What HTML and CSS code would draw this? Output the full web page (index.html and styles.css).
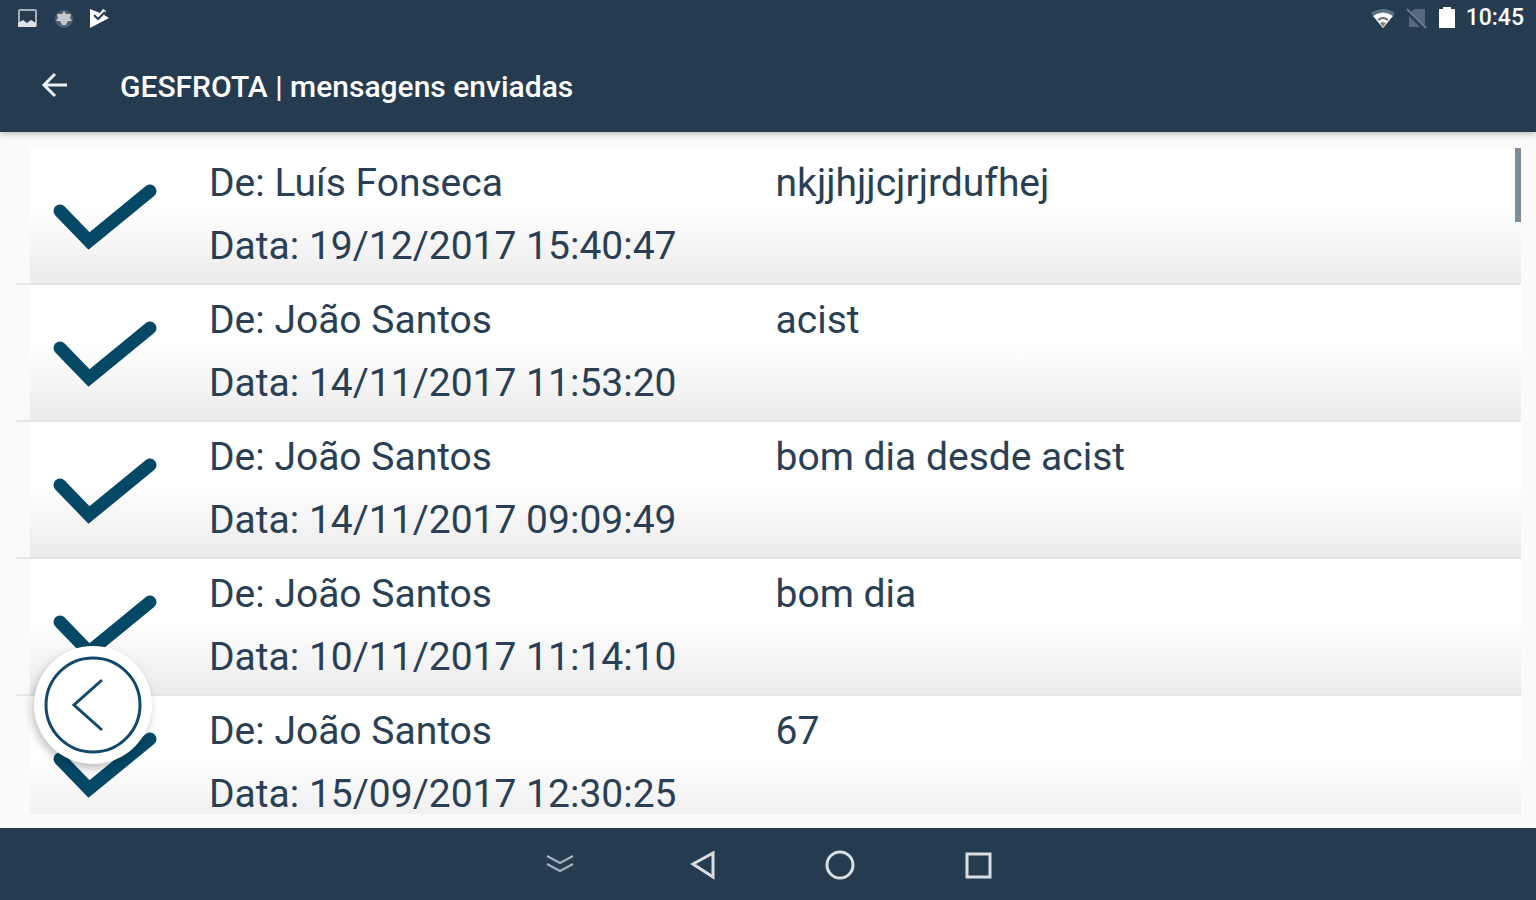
FILE: index.html
```html
<!DOCTYPE html>
<html lang="pt">

<head>
    <meta charset="UTF-8">
    <meta name="viewport" content="width=device-width, initial-scale=1.0">
    <title>GESFROTA | mensagens enviadas</title>
    <link rel="stylesheet" href="styles.css">
</head>

<body>

    <header class="top">
        <div class="status-bar">
            <div class="status-icons">
                <svg width="22" height="22" viewBox="0 0 22 22">
                    <rect x="3" y="3" width="17" height="16" rx="1" fill="none" stroke="#a4afba" stroke-width="2"/>
                    <path d="M2 20V16L7 13L11 16L15 13L20 16V20Z" fill="#dfe4e8"/>
                </svg>
                <svg width="22" height="22" viewBox="0 0 22 22">
                    <circle cx="12" cy="12" r="9" fill="#4c5f71"/>
                    <path d="M12 4L14 7H19L18 11L20 14H16L14 18H10L8 14H4L6 11L5 7H10Z" fill="#c3c9cf"/>
                </svg>
                <svg width="22" height="22" viewBox="0 0 22 22">
                    <path d="M2 2L12 6L15 2L18 4L16 8L21 11L2 21Z" fill="#fff"/>
                    <path d="M6 8L10 12L17 5" fill="none" stroke="#253b50" stroke-width="2"/>
                </svg>
            </div>
            <div class="status-icons status-right">
                <svg width="26" height="22" viewBox="0 0 26 22">
                    <path d="M1 6Q13 -2 25 6L13 21Z" fill="#5d7080"/>
                    <path d="M3 9Q13 2 23 9L13 21Z" fill="#fff"/>
                    <path d="M8 13Q13 9 18 13" fill="none" stroke="#6d6c6c" stroke-width="2"/>
                    <path d="M10 16Q13 14 16 16L13 20Z" fill="#8a8178"/>
                </svg>
                <svg width="22" height="22" viewBox="0 0 22 22">
                    <path d="M8 2H19V20H3V7Z" fill="#566879"/>
                    <path d="M1 5L18 22" stroke="#253b50" stroke-width="3"/>
                    <path d="M1 2L20 21" stroke="#66788a" stroke-width="2"/>
                </svg>
                <svg width="18" height="22" viewBox="0 0 18 22">
                    <path d="M1 2H5V0H13V2H17V21H1Z" fill="#fff"/>
                </svg>
                <span class="clock">10:45</span>
            </div>
        </div>
        <div class="app-bar">
            <button class="back" type="button" aria-label="Voltar">
                <svg width="28" height="28" viewBox="0 0 28 28">
                    <path d="M15 2L4 13L15 24M4 13H27" fill="none" stroke="#eef1f3" stroke-width="3"/>
                </svg>
            </button>
            <h1>GESFROTA | mensagens enviadas</h1>
        </div>
    </header>

    <main class="content">
        <ul class="messages">
            <li class="message">
                <div class="row">
                    <svg class="check" width="106" height="68" viewBox="0 0 106 68"><path d="M8 28L37 58L98 8"/></svg>
                    <div class="sender">
                        <p>De: Luís Fonseca</p>
                        <p>Data: 19/12/2017 15:40:47</p>
                    </div>
                    <p class="text">nkjjhjjcjrjrdufhej</p>
                </div>
            </li>
            <li class="message">
                <div class="row">
                    <svg class="check" width="106" height="68" viewBox="0 0 106 68"><path d="M8 28L37 58L98 8"/></svg>
                    <div class="sender">
                        <p>De: João Santos</p>
                        <p>Data: 14/11/2017 11:53:20</p>
                    </div>
                    <p class="text">acist</p>
                </div>
            </li>
            <li class="message">
                <div class="row">
                    <svg class="check" width="106" height="68" viewBox="0 0 106 68"><path d="M8 28L37 58L98 8"/></svg>
                    <div class="sender">
                        <p>De: João Santos</p>
                        <p>Data: 14/11/2017 09:09:49</p>
                    </div>
                    <p class="text">bom dia desde acist</p>
                </div>
            </li>
            <li class="message">
                <div class="row">
                    <svg class="check" width="106" height="68" viewBox="0 0 106 68"><path d="M8 28L37 58L98 8"/></svg>
                    <div class="sender">
                        <p>De: João Santos</p>
                        <p>Data: 10/11/2017 11:14:10</p>
                    </div>
                    <p class="text">bom dia</p>
                </div>
            </li>
            <li class="message">
                <div class="row">
                    <svg class="check" width="106" height="68" viewBox="0 0 106 68"><path d="M8 28L37 58L98 8"/></svg>
                    <div class="sender">
                        <p>De: João Santos</p>
                        <p>Data: 15/09/2017 12:30:25</p>
                    </div>
                    <p class="text">67</p>
                </div>
            </li>
        </ul>
        <div class="scroll-thumb"></div>
        <button class="float-back" type="button" aria-label="Anterior">
            <svg width="98" height="98" viewBox="0 0 98 98">
                <circle cx="49" cy="49" r="47" fill="none" stroke="#12486a" stroke-width="3"/>
                <path d="M58 24L30 49L58 74" fill="none" stroke="#12486a" stroke-width="3"/>
            </svg>
        </button>
    </main>

    <nav class="nav-bar">
        <button type="button" aria-label="Ocultar">
            <svg width="40" height="40" viewBox="0 0 40 40">
                <path d="M9 12L22 19L35 12M9 20L22 27L35 20" fill="none" stroke="#a9b3bd" stroke-width="2"/>
            </svg>
        </button>
        <button type="button" aria-label="Voltar">
            <svg width="40" height="40" viewBox="0 0 40 40">
                <path d="M15 20L35 9V33Z" fill="none" stroke="#d9dee3" stroke-width="3"/>
            </svg>
        </button>
        <button type="button" aria-label="Início">
            <svg width="40" height="40" viewBox="0 0 40 40">
                <circle cx="22" cy="21" r="13" fill="none" stroke="#d9dee3" stroke-width="3"/>
            </svg>
        </button>
        <button type="button" aria-label="Recentes">
            <svg width="40" height="40" viewBox="0 0 40 40">
                <rect x="9" y="10" width="23" height="23" fill="none" stroke="#d9dee3" stroke-width="3"/>
            </svg>
        </button>
    </nav>

</body>

</html>
```

FILE: styles.css
```css
* {
    box-sizing: border-box;
}

body {
    display: flex;
    flex-direction: column;
    height: 100vh;
    margin: 0;
    font-family: Roboto, "Liberation Sans", sans-serif;
    background-color: #fafafa;
    color: #2a3f54;
}

h1,
p,
ul {
    margin: 0;
    padding: 0;
}

svg {
    display: block;
}

button {
    padding: 0;
    border: 0;
    background: none;
    cursor: pointer;
}

/* Status bar and title */
.top {
    position: relative;
    z-index: 1;
    background-color: #253b50;
    color: #fff;
    box-shadow: 0 2px 6px rgba(0, 0, 0, 0.25);
}

.status-bar {
    display: flex;
    justify-content: space-between;
    align-items: center;
    height: 36px;
    padding: 0 12px 0 16px;
}

.status-icons {
    display: flex;
    align-items: center;
    gap: 14px;
}

.status-right {
    gap: 10px;
}

.clock {
    font-size: 23px;
    font-weight: 500;
    line-height: 38px;
}

.app-bar {
    display: flex;
    align-items: center;
    gap: 52px;
    height: 96px;
    padding: 4px 40px 0;
}

.app-bar h1 {
    font-size: 30px;
    font-weight: 500;
}

/* Message list */
.content {
    position: relative;
    flex: 1;
    min-height: 0;
    padding: 16px 15px 14px 16px;
}

.messages {
    height: 100%;
    overflow: hidden;
    list-style: none;
}

.message {
    padding-left: 14px;
    border-bottom: 2px solid #e6e6e6;
}

.row {
    display: grid;
    grid-template-columns: 179px 38% 1fr;
    padding: 15px 0 17px;
    background: linear-gradient(#fff 45%, #ebebeb);
    font-size: 39px;
    line-height: 40px;
}

.sender {
    display: grid;
    gap: 23px;
}

.check {
    margin: 20px 0 0 22px;
    fill: none;
    stroke: #044866;
    stroke-width: 13px;
    stroke-linecap: round;
}

/* Overlay scroll indicator */
.scroll-thumb {
    position: absolute;
    top: 16px;
    right: 15px;
    width: 6px;
    height: 74px;
    background-color: #7f8c98;
}

.float-back {
    position: absolute;
    left: 34px;
    bottom: 64px;
    display: grid;
    place-items: center;
    width: 118px;
    height: 118px;
    border-radius: 50%;
    background-color: #fff;
    box-shadow: -2px 4px 8px rgba(0, 0, 0, 0.25);
}

/* System navigation */
.nav-bar {
    display: flex;
    justify-content: center;
    align-items: center;
    gap: 100px;
    height: 72px;
    background-color: #253b50;
}
```
